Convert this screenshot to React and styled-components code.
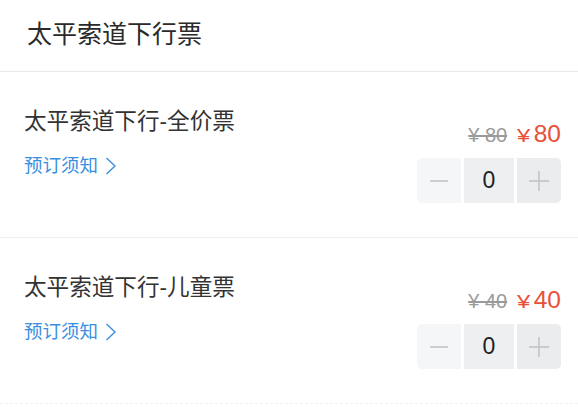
import React from "react";
import styled, { createGlobalStyle } from "styled-components";

const Global = createGlobalStyle`
  html, body { margin: 0; padding: 0; background: #fff; }
  body { font-family: "Liberation Sans", "Noto Sans CJK SC", sans-serif; -webkit-font-smoothing: antialiased; }
  * { box-sizing: border-box; }
`;

const Page = styled.div`
  width: 578px;
  height: 407px;
  background: #fff;
  overflow: hidden;
  display: flex;
  flex-direction: column;
`;

const Header = styled.div`
  height: 72px;
  padding: 17px 0 0 27px;
  border-bottom: 1.5px solid #e9e9e9;
  flex-shrink: 0;
`;

const HeaderTitle = styled.h1`
  margin: 0;
  font-size: 25px;
  line-height: 34px;
  font-weight: 400;
  color: #2a2a2a;
`;

const List = styled.div`
  display: flex;
  flex-direction: column;
  border-bottom: 1px dashed #f1f1f4;
`;

const Item = styled.div`
  display: flex;
  justify-content: space-between;
  align-items: flex-start;
  padding: 35px 17px 34px 24px;
  border-bottom: ${(p) => (p.$last ? "none" : "1px solid #f0f0f0")};
`;

const Left = styled.div`
  display: flex;
  flex-direction: column;
`;

const Title = styled.div`
  font-size: 22.6px;
  line-height: 30px;
  color: #333;
`;

const Notice = styled.a`
  margin-top: 16px;
  display: flex;
  align-items: center;
  gap: 7px;
  font-size: 18.5px;
  line-height: 26px;
  color: #3b8fe1;
  text-decoration: none;
`;

const Right = styled.div`
  margin-top: 12px;
  display: flex;
  flex-direction: column;
  align-items: flex-end;
`;

const PriceRow = styled.div`
  height: 30px;
  display: flex;
  align-items: baseline;
  gap: 10px;
  line-height: 30px;
`;

const OldPrice = styled.span`
  font-size: 20px;
  color: #9a9a9a;
  text-decoration: line-through;
  text-decoration-thickness: 1.5px;
  white-space: pre;
`;

const NewPrice = styled.span`
  color: #e8503a;
  font-size: 24.5px;
`;

const Yen = styled.span`
  display: inline-block;
  font-size: 19px;
  transform: scaleX(1.25);
  transform-origin: left center;
  margin-right: 6px;
`;

const Stepper = styled.div`
  margin-top: 9px;
  display: flex;
  gap: 3px;
  height: 45px;
`;

const StepBtn = styled.div`
  width: ${(p) => p.$w}px;
  height: 45px;
  display: flex;
  align-items: center;
  justify-content: center;
  background: ${(p) => p.$bg};
  border-radius: ${(p) => p.$radius};
  font-size: 23px;
  color: #222;
`;

const Minus = () => (
  <svg width="20" height="20" viewBox="0 0 20 20">
    <line x1="1" y1="10" x2="19" y2="10" stroke="#c3c4c7" strokeWidth="1.6" />
  </svg>
);

const Plus = () => (
  <svg width="22" height="22" viewBox="0 0 22 22">
    <line x1="1" y1="11" x2="21" y2="11" stroke="#c3c4c7" strokeWidth="1.6" />
    <line x1="11" y1="1" x2="11" y2="21" stroke="#c3c4c7" strokeWidth="1.6" />
  </svg>
);

const Chevron = () => (
  <svg width="12" height="20" viewBox="0 0 12 20">
    <polyline points="1.5,2 10,10 1.5,18" fill="none" stroke="#3b8fe1" strokeWidth="1.4" />
  </svg>
);

const tickets = [
  { name: "太平索道下行-全价票", price: 80 },
  { name: "太平索道下行-儿童票", price: 40 },
];

export default function App() {
  return (
    <Page>
      <Global />
      <Header>
        <HeaderTitle>太平索道下行票</HeaderTitle>
      </Header>
      <List>
        {tickets.map((t, i) => (
          <Item key={t.name} $last={i === tickets.length - 1}>
            <Left>
              <Title>{t.name}</Title>
              <Notice>
                预订须知
                <Chevron />
              </Notice>
            </Left>
            <Right>
              <PriceRow>
                <OldPrice>{`¥ ${t.price}`}</OldPrice>
                <NewPrice>
                  <Yen>¥</Yen>
                  {t.price}
                </NewPrice>
              </PriceRow>
              <Stepper>
                <StepBtn $w={44} $bg="#f5f6f8" $radius="5px 0 0 5px">
                  <Minus />
                </StepBtn>
                <StepBtn $w={50} $bg="#eeeff1" $radius="0">
                  0
                </StepBtn>
                <StepBtn $w={44} $bg="#ebecee" $radius="0 5px 5px 0">
                  <Plus />
                </StepBtn>
              </Stepper>
            </Right>
          </Item>
        ))}
      </List>
    </Page>
  );
}
